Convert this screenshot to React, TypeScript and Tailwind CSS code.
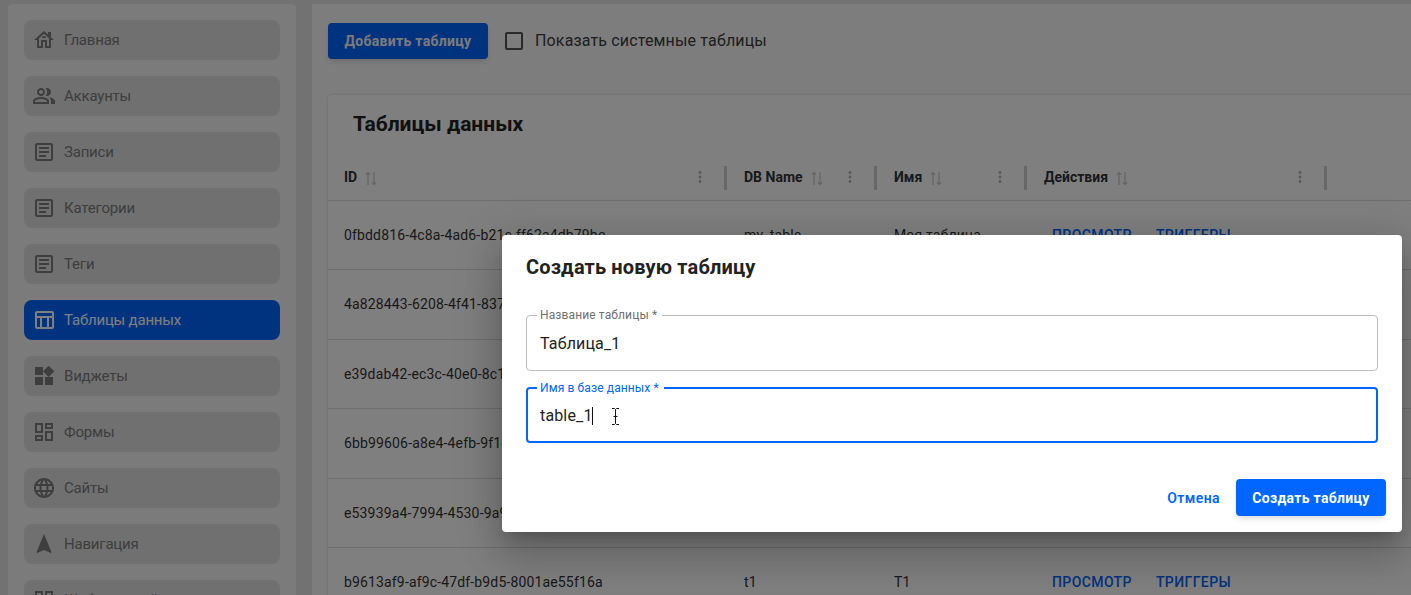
import React from "react";
import {
  MdOutlineHouse, MdOutlinePeopleAlt, MdOutlineArticle, MdOutlineTableChart, MdWidgets,
  MdOutlineDashboard, MdLanguage, MdNavigation, MdMoreVert,
} from "react-icons/md";

const nav = [
  { label: "Главная", Icon: MdOutlineHouse },
  { label: "Аккаунты", Icon: MdOutlinePeopleAlt },
  { label: "Записи", Icon: MdOutlineArticle },
  { label: "Категории", Icon: MdOutlineArticle },
  { label: "Теги", Icon: MdOutlineArticle },
  { label: "Таблицы данных", Icon: MdOutlineTableChart, active: true },
  { label: "Виджеты", Icon: MdWidgets },
  { label: "Формы", Icon: MdOutlineDashboard },
  { label: "Сайты", Icon: MdLanguage },
  { label: "Навигация", Icon: MdNavigation },
  { label: "Шаблоны сайтов", Icon: MdOutlineDashboard },
];

const cols = [
  { label: "ID", w: "w-[400px]" },
  { label: "DB Name", w: "w-[150px]" },
  { label: "Имя", w: "w-[150px]" },
  { label: "Действия", w: "w-[300px]" },
];

const rows = [
  { id: "0fbdd816-4c8a-4ad6-b21c-ff62a4db79be", db: "my_table", name: "Моя таблица", h: "h-[69px]" },
  { id: "4a828443-6208-4f41-8374", db: "", name: "", h: "h-[70px]" },
  { id: "e39dab42-ec3c-40e0-8c14", db: "", name: "", h: "h-[69px]" },
  { id: "6bb99606-a8e4-4efb-9f14", db: "", name: "", h: "h-[70px]" },
  { id: "e53939a4-7994-4530-9a94", db: "", name: "", h: "h-[69px]" },
  { id: "b9613af9-af9c-47df-b9d5-8001ae55f16a", db: "t1", name: "T1", h: "h-[69px]" },
];

function SortIcon() {
  return (
    <svg width="12" height="15" viewBox="0 0 12 15" className="ml-[8px] mt-[2px]" fill="none" stroke="#c6c6c6" strokeWidth="1.200">
      <path d="M3 14V1.500M.8 3.700 3 1.500l2.200 2.200" />
      <path d="M9 1v12.500M6.800 11.300 9 13.500l2.200-2.200" />
    </svg>
  );
}

function Field({ label, value, focused }: { label: string; value: string; focused?: boolean }) {
  return (
    <div
      className={
        "relative h-14 rounded flex items-center px-[13px] " +
        (focused ? "border-2 border-[#0066ff]" : "border border-[#bdbdbd]")
      }
    >
      <span
        className={
          "absolute top-[-8px] bg-white pl-[3px] pr-[5px] text-xs leading-[14px] tracking-[0.12px] " +
          (focused ? "left-[9px] text-[#0066ff]" : "left-[10px] text-[#6f6f6f]")
        }
      >
        {label}
      </span>
      <span className={"text-base tracking-[0.15px] text-[#222222] mt-[1px] " + (focused ? "-ml-px" : "")}>{value}</span>
      {focused && <span className="w-px h-[18px] bg-[#111111] mt-[1px] -ml-px" />}
      {focused && (
        <svg width="9" height="17" viewBox="0 0 9 17" className="ml-[18px] mt-[3px]" fill="none" stroke="#111" strokeWidth="1">
          <path d="M1 .5h2.500L4.500 1.500 5.500.5H8M4.500 1.500v14M1 16.500h2.500l1-1 1 1H8M2.500 8.500h4" />
        </svg>
      )}
    </div>
  );
}

export default function App() {
  return (
    <div className="relative w-[1411px] h-[595px] overflow-hidden bg-[#e4e4e4] font-['Roboto',sans-serif]">
      <div className="flex gap-4 pt-1 pl-2 h-full">
        <aside className="w-[288px] shrink-0 bg-[#f6f6f6] rounded-t px-4 pt-4 flex flex-col gap-4 h-[640px]">
          {nav.map(({ label, Icon, active }) => (
            <div
              key={label}
              className={
                "h-10 shrink-0 rounded-lg flex items-center pl-2 gap-2 text-[15px] tracking-[-0.2px] " +
                (active ? "bg-[#0066ff] text-white" : "bg-[#e0e0e0] text-[#7c7c7c]")
              }
            >
              <Icon size={24} />
              <span>{label}</span>
            </div>
          ))}
        </aside>
        <main className="flex-1 min-w-0 bg-[#fbfbfb] px-4 pt-[19px]">
          <div className="flex items-center h-9">
            <button className="w-[160px] h-9 rounded bg-[#0066ff] text-[#f5f5f5] text-sm font-bold tracking-[0.3px] shadow-md">
              Добавить таблицу
            </button>
            <span className="ml-[17px] w-[18px] h-[18px] rounded-[2px] border-2 border-[#555555]" />
            <span className="ml-3 text-base text-[#3c3c3c] tracking-[0.15px]">Показать системные таблицы</span>
          </div>
          <section className="mt-[36px] w-[1200px] bg-white rounded shadow-[0_0_3px_rgba(0,0,0,0.18)]">
            <h2 className="h-[58px] pl-[25px] pt-[16px] text-[21px] leading-[26px] font-bold text-[#222222]">Таблицы данных</h2>
            <div className="flex h-[48px] border-b border-[#dcdcdc]">
              {cols.map((c) => (
                <div key={c.label} className={c.w + " relative flex items-center pl-4 pt-[1px] text-sm font-bold text-[#333333]"}>
                  <span>{c.label}</span>
                  <SortIcon />
                  <MdMoreVert size={18} className="absolute right-[19px] text-[#b5b5b5]" />
                  <span className="absolute right-[1px] top-[13px] w-[3px] h-[24px] bg-[#cfcfcf]" />
                </div>
              ))}
            </div>
            {rows.map((r) => (
              <div key={r.id} className={r.h + " flex items-center pb-[1px] border-b border-[#dcdcdc] text-sm tracking-[0.15px] text-[#333333]"}>
                <div className="w-[400px] pl-4">{r.id}</div>
                <div className="w-[150px] pl-4">{r.db}</div>
                <div className="w-[150px] pl-4">{r.name}</div>
                {r.db && (
                  <div className="pl-6 flex gap-6 font-medium text-[#0066ff] tracking-[0.4px]">
                    <span>ПРОСМОТР</span>
                    <span>ТРИГГЕРЫ</span>
                  </div>
                )}
              </div>
            ))}
          </section>
        </main>
      </div>

      <div className="absolute inset-0 bg-black/50" />

      <div className="absolute left-[502px] top-[235px] w-[900px] h-[297px] bg-white rounded px-6 pt-4 flex flex-col shadow-[0_11px_15px_-7px_rgba(0,0,0,0.2),0_24px_38px_3px_rgba(0,0,0,0.14),0_9px_46px_8px_rgba(0,0,0,0.12)]">
        <h2 className="text-xl leading-8 font-bold tracking-[0.15px] text-[#222222]">Создать новую таблицу</h2>
        <div className="mt-[32px] flex flex-col gap-4">
          <Field label="Название таблицы *" value="Таблица_1" />
          <Field label="Имя в базе данных *" value="table_1" focused />
        </div>
        <div className="mt-[36px] -mr-2 flex items-center justify-end gap-4">
          <span className="text-sm font-semibold tracking-[0.4px] text-[#0066ff]">Отмена</span>
          <button className="w-[150px] h-[37px] rounded bg-[#0066ff] text-white text-sm font-bold tracking-[0.3px] shadow-md">
            Создать таблицу
          </button>
        </div>
      </div>
    </div>
  );
}
